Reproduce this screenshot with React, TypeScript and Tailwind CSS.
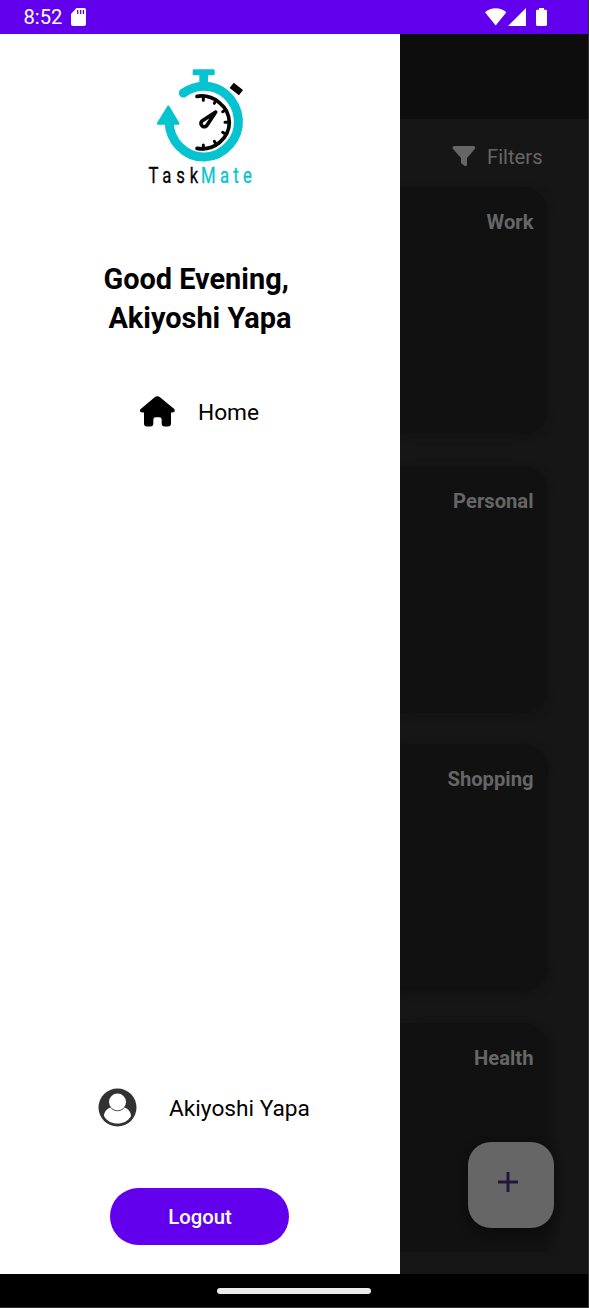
import React from "react";

function StatusBar() {
  return (
    <header className="flex h-[34px] shrink-0 items-center justify-between border-r border-[#303030] bg-[#6200ee] pr-[41px] pl-[23.500px] text-white">
      <div className="flex items-center gap-[9px]">
        <span className="text-[20.200px] leading-[34px]">8:52</span>
        <svg className="h-[18px] w-[15px]" viewBox="0 0 15 18" fill="none">
          <path d="M5.5 0H13a2 2 0 0 1 2 2v14a2 2 0 0 1-2 2H2a2 2 0 0 1-2-2V6z" fill="#fff" />
          <path d="M6.7 2v4M9.6 2v4M12.4 2v4" stroke="#6200ee" strokeWidth="1.3" />
        </svg>
      </div>
      <svg className="h-[18px] w-[62px]" viewBox="0 0 62 18" fill="#fff">
        <path d="M0 4.2C6.200-1.200 15.200-1.200 21.400 4.200L10.700 17.500z" />
        <path d="M41 0v18H23z" />
        <path d="M54 0h5v1.800h1.800a1.200 1.200 0 0 1 1.200 1.200v13.500a1.400 1.400 0 0 1-1.400 1.400h-8.200a1.400 1.400 0 0 1-1.400-1.400V3a1.200 1.200 0 0 1 1.200-1.200H54z" />
      </svg>
    </header>
  );
}

function Logo() {
  return (
    <svg className="h-[130px] w-[120px]" viewBox="0 0 360 390" fill="none">
      <path d="M162 28h58q4 0 4 4v10q0 4-4 4h-16v27h-26V46h-16q-4 0-4-4V32q0-4 4-4z" fill="#06c4cf" />
      <path d="M130 99C166 73 219 69 258 103C303 145 308 211 269 254C228 302 160 303 118 259C98 239 88 211 87 184" stroke="#06c4cf" strokeWidth="27" strokeLinecap="round" />
      <path d="M85 140L115 191H54z" fill="#06c4cf" stroke="#06c4cf" strokeWidth="7" strokeLinejoin="round" />
      <path d="M275 76L303 98" stroke="#050505" strokeWidth="20" />
      <path d="M171 109C219 101 267 139 268 187C268 235 222 274 171 265" stroke="#050505" strokeWidth="11" strokeLinecap="round" />
      <path d="M190 109v12M229 120l-6 10M258 149l-10 6M267 187h-12M257 223l-9-6M229 254l-6-10M190 267v-12" stroke="#050505" strokeWidth="9" strokeLinecap="round" />
      <path d="M227 156L186 183C181 187 182 196 188 199C194 202 200 199 202 194L227 156z" stroke="#050505" strokeWidth="11" strokeLinejoin="round" />
      <g transform="scale(.77 1)" fontSize="65">
        <text x="33" y="368" textLength="194" lengthAdjust="spacing" fill="#050505" stroke="#050505" strokeWidth="1">Task</text>
        <text x="238" y="368" textLength="198" lengthAdjust="spacing" fill="#06c4cf" stroke="#06c4cf" strokeWidth="1">Mate</text>
      </g>
    </svg>
  );
}

function Drawer() {
  return (
    <aside className="flex w-[400px] shrink-0 flex-col items-center bg-white pt-[26px] text-black">
      <Logo />
      <h1 className="mt-[69.500px] flex flex-col text-[28.900px] leading-[39px] font-bold">
        <span className="-ml-[5px]">Good Evening,</span>
        <span>Akiyoshi Yapa</span>
      </h1>
      <nav className="mt-[55.500px] flex h-[36px] w-full items-center pl-[140px]">
        <svg className="h-[31px] w-[35px]" viewBox="150 422 105 92">
          <path d="M194 425Q202 419 210 425L252 460Q256 464 253 469Q251 472 243 471V504Q243 513 234 513H224Q215 513 215 504V492Q215 485 208 485H197Q190 485 190 492V504Q190 513 181 513H171Q162 513 162 504V471Q154 472 151 469Q148 464 153 460z" />
        </svg>
        <a className="ml-[23px] pt-[3px] text-[22.700px] leading-[36px]">Home</a>
      </nav>
      <div className="mt-auto flex h-[40px] w-full items-center pl-[98px]">
        <svg className="h-[39px] w-[39px]" viewBox="0 0 39 39">
          <circle cx="19.500" cy="19.500" r="19" fill="#323232" />
          <path d="M6 28C6 24 9 20.500 12.500 19.500C16 24.500 23 24.500 26.500 19.500C30 20.500 33 24 33 28C28 38 11 38 6 28z" fill="#fff" />
          <circle cx="19.500" cy="14" r="8.500" fill="#fff" />
        </svg>
        <span className="ml-[32px] pt-[4px] text-[22.700px] leading-[36px]">Akiyoshi Yapa</span>
      </div>
      <button className="mt-[61px] mr-[1px] mb-[29px] h-[57px] w-[179px] rounded-full bg-[#6200ee] pt-[2px] pl-[1px] text-[20.300px] font-medium text-white">
        Logout
      </button>
    </aside>
  );
}

function Category({ name, last = false }: { name: string; last?: boolean }) {
  return (
    <section
      className={
        last
          ? "h-[229px] w-[148px] shrink-0 rounded-tr-[26px] bg-[#111111] shadow-[6px_0_10px_-4px_#111111]"
          : "h-[247px] w-[148px] shrink-0 rounded-r-[26px] bg-[#111111] shadow-[0_2px_10px_#121212]"
      }
    >
      <h2 className="pt-[20px] pr-[14.500px] text-right text-[20.200px] leading-[30px] font-bold text-[#666666]">{name}</h2>
    </section>
  );
}

function TaskPage() {
  return (
    <main className="relative flex min-w-0 flex-1 flex-col overflow-hidden border-r border-[#303030] bg-[#161616]">
      <div className="h-[85px] shrink-0 bg-[#0d0d0d]" />
      <div className="flex h-[68px] shrink-0 items-center pt-[6px] pl-[52px] text-[#666666]">
        <svg className="h-[21px] w-[24px]" viewBox="0 0 24 21" fill="currentColor">
          <path d="M2 0H22Q24 .8 22.800 3L15 12V18.500Q14.500 21 12.500 19.800L9.500 17.500Q9 17 9 16V12L1 3Q-.2 .8 2 0z" />
        </svg>
        <span className="ml-[11px] pt-[2px] text-[20.200px] leading-[30px]">Filters</span>
      </div>
      <div className="flex flex-col gap-[31.500px]">
        <Category name="Work" />
        <Category name="Personal" />
        <Category name="Shopping" />
        <Category name="Health" last />
      </div>
      <button aria-label="Add task" className="absolute top-[1108px] left-[68px] flex h-[86px] w-[86px] items-center justify-center rounded-[23px] bg-[#666666] pr-[6px] pb-[6px] shadow-[0_4px_12px_#0b0b0b]">
        <svg className="h-[20px] w-[20px]" viewBox="0 0 20 20">
          <path d="M10 0v20M0 10h20" stroke="#21163b" strokeWidth="2.900" />
        </svg>
      </button>
    </main>
  );
}

export default function App() {
  return (
    <div className="flex h-[1308px] w-[589px] flex-col overflow-hidden bg-black font-['Roboto',sans-serif]">
      <StatusBar />
      <div className="flex h-[1240px] shrink-0">
        <Drawer />
        <TaskPage />
      </div>
      <footer className="flex h-[34px] shrink-0 items-center justify-center border-r border-b border-[#303030]">
        <div className="h-[6px] w-[154px] rounded-full bg-[#ebebeb]" />
      </footer>
    </div>
  );
}
